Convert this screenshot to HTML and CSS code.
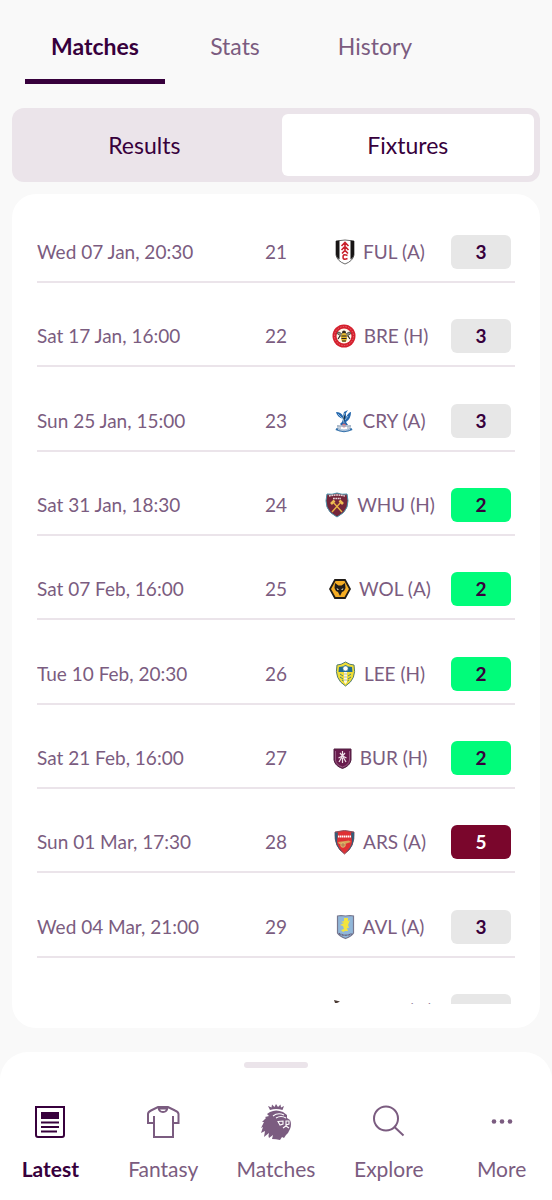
FILE: index.html
```html
<!DOCTYPE html>
<html lang="en">
<head>
<meta charset="utf-8">
<meta name="viewport" content="width=device-width, initial-scale=1">
<title>Fixtures</title>
<link rel="stylesheet" href="styles.css">
</head>
<body>
<div class="app">
  <div class="tabs" role="tablist">
    <button class="tab is-active" role="tab" aria-selected="true">Matches</button>
    <button class="tab" role="tab" aria-selected="false">Stats</button>
    <button class="tab" role="tab" aria-selected="false">History</button>
  </div>

  <div class="segment">
    <button class="segment-option">Results</button>
    <button class="segment-option is-selected">Fixtures</button>
  </div>

  <main class="card">
    <div class="fixtures-scroll">
      <table class="fixtures">
        <colgroup><col><col class="col-week"><col class="col-team"><col class="col-rating"></colgroup>
        <tbody>
          <tr>
            <td>Wed 07 Jan, 20:30</td><td class="week">21</td>
            <td><div class="team">
              <svg class="crest" width="20" height="26" viewBox="0 0 20 26" aria-hidden="true"><path d="M1 2Q10 0 19 2V16Q18 22 10 25Q2 22 1 16Z" fill="#fff" stroke="#444" stroke-width=".8"/><path d="M1 2 4.500 1.500V20.500Q1 18 1 15ZM15.500 1.500 19 2V15Q19 18 15.500 20.500Z" fill="#171415"/><path d="M6.500 7 10 3.500 13.500 7M6.500 11 10 7.500 13.500 11M7 14.500 10 11.500 13 14.500M10 4V13M12.500 16.500Q8 14.500 8 18T12.500 19.500" fill="none" stroke="#c9202c" stroke-width="1.600"/></svg>
              <span>FUL (A)</span></div></td>
            <td><span class="rating">3</span></td>
          </tr>
          <tr>
            <td>Sat 17 Jan, 16:00</td><td class="week">22</td>
            <td><div class="team">
              <svg class="crest" width="24" height="24" viewBox="0 0 24 24" aria-hidden="true"><circle cx="12" cy="12" r="11.500" fill="#d51f2d"/><circle cx="12" cy="12" r="9.500" fill="none" stroke="#e36a70" stroke-width="1" stroke-dasharray="1.500 1.200"/><circle cx="12" cy="12" r="7.500" fill="#fff7e9"/><path d="M11 11Q6 6 5 9.500L10 13ZM13 11Q18 6 19 9.500L14 13Z" fill="#8f8e80" stroke="#332f29" stroke-width=".7"/><circle cx="12" cy="8.500" r="2" fill="#33291b"/><ellipse cx="12" cy="13.500" rx="3" ry="4.500" fill="#e5b82f"/><path d="M9.500 12H14.500M9.500 14.500H14.500M10 17H14M8 12 6 15M16 12 18 15" stroke="#29231b" stroke-width="1.200"/></svg>
              <span>BRE (H)</span></div></td>
            <td><span class="rating">3</span></td>
          </tr>
          <tr>
            <td>Sun 25 Jan, 15:00</td><td class="week">23</td>
            <td><div class="team">
              <svg class="crest" width="20" height="24" viewBox="0 0 20 24" aria-hidden="true"><path d="M9 10Q3 8 2 3Q7 3 9 7L10 3 14 1 12 4 12 8Q15 3 17 3Q17 10 12 13L14 16 8 17 6 15 8 13Z" fill="#2467ad"/><path d="M4 5 9 10M11 4 9 9 10 14M14 7 11 11" stroke="#a8cce7" stroke-width=".8"/><circle cx="10" cy="16.500" r="2" fill="#d67379"/><path d="M3 17H17M4 20V16M6 20V17M14 20V17M16 20V16" stroke="#a6b5c7" stroke-width="1.300"/><path d="M2 20Q10 24 18 20" fill="none" stroke="#3472ac" stroke-width="2.500"/><path d="M4 20.500Q10 23 16 20.500" fill="none" stroke="#d5dce7" stroke-width=".8"/></svg>
              <span>CRY (A)</span></div></td>
            <td><span class="rating">3</span></td>
          </tr>
          <tr>
            <td>Sat 31 Jan, 18:30</td><td class="week">24</td>
            <td><div class="team">
              <svg class="crest" width="24" height="26" viewBox="0 0 24 26" aria-hidden="true"><path d="M2 2Q7 3 12 1Q17 3 22 2Q24 9 22 15Q20 21 12 25Q4 21 2 15Q0 9 2 2Z" fill="#74263a" stroke="#4993aa" stroke-width="1"/><path d="M4 4Q12 2 20 4M8 6.500H16" fill="none" stroke="#e6d6d8" stroke-width="1.500" stroke-dasharray="1.800 .6"/><path d="M8 10 17 20M16 10 7 20" stroke="#e9b345" stroke-width="1.400"/><path d="M6 12 9.500 8.500M14.500 8.500 18 12" stroke="#edbd54" stroke-width="2.600"/></svg>
              <span>WHU (H)</span></div></td>
            <td><span class="rating is-easy">2</span></td>
          </tr>
          <tr>
            <td>Sat 07 Feb, 16:00</td><td class="week">25</td>
            <td><div class="team">
              <svg class="crest" width="22" height="20" viewBox="0 0 22 20" aria-hidden="true"><path d="M6 1H16L21 10 16 19H6L1 10Z" fill="#f5ad24" stroke="#211d19" stroke-width="1.800"/><path d="M6 4 9.500 6.500H12.500L16 4 16.500 9 15 12 13 13 11 17 9 13 7 12 5.500 9Z" fill="#211d1a"/><path d="M7.500 9 10 10.500 8.500 11ZM14.500 9 12 10.500 13.500 11Z" fill="#fff2c3"/></svg>
              <span>WOL (A)</span></div></td>
            <td><span class="rating is-easy">2</span></td>
          </tr>
          <tr>
            <td>Tue 10 Feb, 20:30</td><td class="week">26</td>
            <td><div class="team">
              <svg class="crest" width="21" height="26" viewBox="0 0 21 26" aria-hidden="true"><path d="M2 4Q6 4 10.500 1Q15 4 19 4Q22 18 10.500 25Q-1 18 2 4Z" fill="#f0dd35" stroke="#527c71" stroke-width="1"/><path d="M4 6Q8 6 10.500 4Q13 6 17 6L17.500 11H3.500Z" fill="#216c93"/><circle cx="10.500" cy="7.500" r="2.500" fill="#fff" stroke="#65949e" stroke-width=".6"/><path d="M9 11H12V21L10.500 23 9 21Z" fill="#fff9dd"/><path d="M5 13 8 15M5 16 8 18M7 19 8.500 20M16 13 13 15M16 16 13 18M14 19 12.500 20" stroke="#4d8579" stroke-width="1"/><path d="M9 13H12M9 16H12M9 19H12" stroke="#9aac9b" stroke-width=".8"/></svg>
              <span>LEE (H)</span></div></td>
            <td><span class="rating is-easy">2</span></td>
          </tr>
          <tr>
            <td>Sat 21 Feb, 16:00</td><td class="week">27</td>
            <td><div class="team">
              <svg class="crest" width="19" height="21" viewBox="0 0 19 21" aria-hidden="true"><path d="M1 1H18V12Q17 18 9.500 20.500Q2 18 1 12Z" fill="#681b4c" stroke="#512042"/><path d="M2.500 3V12Q3 17 9.500 19Q16 17 16.500 12V3" fill="none" stroke="#a36b91" stroke-width=".8"/><path d="M9.500 3V7M7 5 9.500 8 12 5M5.500 10 9.500 8 13.500 10M6 14 9.500 8 13 14M9.500 10V15" fill="none" stroke="#efe2e9" stroke-width="1.200"/></svg>
              <span>BUR (H)</span></div></td>
            <td><span class="rating is-easy">2</span></td>
          </tr>
          <tr>
            <td>Sun 01 Mar, 17:30</td><td class="week">28</td>
            <td><div class="team">
              <svg class="crest" width="21" height="26" viewBox="0 0 21 26" aria-hidden="true"><path d="M1 3Q10.500 0 20 3Q21 18 10.500 25Q0 18 1 3Z" fill="#df3034" stroke="#8b5360"/><path d="M1 3Q3 4 4 3L3 13Q4 20 10.500 24Q0 19 1 3ZM20 3Q18 4 17 3L18 13Q17 20 10.500 24Q21 19 20 3Z" fill="#315d79"/><path d="M4 7.500H17" stroke="#fff" stroke-width="2" stroke-dasharray="1.500 .5"/><path d="M4 13 15 11.500 17 13 11 15H5Z" fill="#d4a759"/><circle cx="9" cy="16" r="2.300" fill="#b88858" stroke="#edc574" stroke-width=".8"/></svg>
              <span>ARS (A)</span></div></td>
            <td><span class="rating is-hard">5</span></td>
          </tr>
          <tr>
            <td>Wed 04 Mar, 21:00</td><td class="week">29</td>
            <td><div class="team">
              <svg class="crest" width="19" height="26" viewBox="0 0 19 26" aria-hidden="true"><path d="M1.500 2 5 1.500 9.500 2 14 1.500 17.500 2V19Q16 22 9.500 24.500Q3 22 1.500 19Z" fill="#91b7d9" stroke="#77778f" stroke-width="1.200"/><path d="M8 4 12 4 12 7 14 6 12 11 13 14 11 14 12 17H9L7 18 5 16 8 15 7 12 4 11 8 9 5 8 8 7Z" fill="#f3e43d"/><path d="M3 19.500Q9.500 23 16 19.500" fill="none" stroke="#635875" stroke-width="1.500" stroke-dasharray="1 .5"/></svg>
              <span>AVL (A)</span></div></td>
            <td><span class="rating">3</span></td>
          </tr>
          <tr>
            <td>Sat 14 Mar, 18:30</td><td class="week">30</td>
            <td><div class="team">
              <svg class="crest" width="24" height="24" viewBox="0 0 24 24" aria-hidden="true"><path d="M7 1 13 2.500 10 4H8Z" fill="#4b3b34"/><path d="M5 6H19V17L12 23 5 17Z" fill="#262223"/><path d="M9 6V20M13 6V21M17 6V18" stroke="#fff" stroke-width="2"/></svg>
              <span>NEW (H)</span></div></td>
            <td><span class="rating">3</span></td>
          </tr>
        </tbody>
      </table>
    </div>
  </main>

  <nav class="bottom-nav" aria-label="Main">
    <div class="handle"></div>
    <div class="nav-items">
      <a class="nav-item is-active" href="#latest">
        <svg class="nav-icon" width="36" height="36" viewBox="0 0 36 36" aria-hidden="true"><path d="M4 3H32V31Q32 33 30 33H6Q4 33 4 31Z" fill="none" stroke="currentColor" stroke-width="2"/><path d="M9 8H27V15H9Z" fill="currentColor"/><path d="M9 18.500H27M9 23H27M9 27.500H25" stroke="currentColor" stroke-width="2"/></svg>
        <span>Latest</span>
      </a>
      <a class="nav-item" href="#fantasy">
        <svg class="nav-icon" width="36" height="36" viewBox="0 0 36 36" fill="none" stroke="currentColor" stroke-width="2" aria-hidden="true"><path d="M9 12V33H28V12M9 19H3V10Q3 8 6 6.500L13 3H23L30 6.500Q33.500 8 33.500 10V19H28"/><path d="M13.500 3.500Q14 8 18 8T22.500 3.500M13 4.500H23"/></svg>
        <span>Fantasy</span>
      </a>
      <a class="nav-item" href="#matches">
        <svg class="nav-icon" width="36" height="36" viewBox="0 0 36 36" aria-hidden="true"><path d="M12 6 10 2 13.500 3.500 14 .5 16.500 3 18 0 20 3 22.500 .5 23 3.500 26 2 24.500 6Q18 4 12 6Z" fill="currentColor"/><path d="M12 8Q18 5 25 8L29 11 29 14 32 16Q34 20 32 25L30 29 28 31 26 34 24 33 22 36Q18 35 14 35L15 31 11 34Q10 32 11 29L6 33 7 27 3 29 5 23 3 24 6 18 4 18 8 14 7 13 11 12 9 10Z" fill="currentColor"/><path d="M15 12Q20 8 26 11M18 14Q23 11 28 14M20 17.500 25 17 25 20 22 21ZM28 17 31 17 31 20 28 21ZM25 24 28 22 31 24" fill="none" stroke="#fff" stroke-width="1.100"/></svg>
        <span>Matches</span>
      </a>
      <a class="nav-item" href="#explore">
        <svg class="nav-icon" width="36" height="36" viewBox="0 0 36 36" fill="none" stroke="currentColor" stroke-width="2" aria-hidden="true"><circle cx="15" cy="14.500" r="12"/><path d="M23.500 23 32.500 31.500"/></svg>
        <span>Explore</span>
      </a>
      <a class="nav-item" href="#more">
        <svg class="nav-icon" width="36" height="36" viewBox="0 0 36 36" fill="currentColor" aria-hidden="true"><circle cx="10" cy="17.500" r="2.300"/><circle cx="18" cy="17.500" r="2.300"/><circle cx="26" cy="17.500" r="2.300"/></svg>
        <span>More</span>
      </a>
    </div>
  </nav>
</div>
</body>
</html>
```
FILE: styles.css
```css
:root {
  --ink: #37003c;
  --muted: #7b5c80;
  --lilac: #ebe4ea;
}

* { box-sizing: border-box; }

body {
  margin: 0;
  background: #f9f9f9;
  color: var(--muted);
  font-family: Lato, "Open Sans", sans-serif;
  font-size: 19px;
  line-height: 24px;
}

button {
  border: 0;
  background: none;
  font: inherit;
  cursor: pointer;
}

.app {
  display: flex;
  flex-direction: column;
  height: 100vh;
}

.tabs {
  display: flex;
  padding: 8px 0 0 25px;
}

.tab {
  flex: 0 0 140px;
  height: 76px;
  padding: 4px 0 0;
  border-bottom: 5px solid transparent;
  color: var(--muted);
  font-size: 23px;
}

.tab.is-active {
  border-color: var(--ink);
  color: var(--ink);
  font-weight: 700;
}

.segment {
  display: grid;
  grid-template-columns: 1fr 1fr;
  gap: 11px;
  margin: 24px 12px 12px;
  padding: 6px;
  border-radius: 12px;
  background: var(--lilac);
}

.segment-option {
  height: 62px;
  border-radius: 6px;
  color: var(--ink);
  font-size: 23px;
}

.segment-option.is-selected { background: #fff; }

.card {
  flex: 1;
  display: flex;
  min-height: 0;
  margin: 0 12px 24px;
  padding: 5px 25px 24px;
  border-radius: 24px;
  background: #fff;
}

.fixtures-scroll {
  flex: 1;
  overflow-y: auto;
  scrollbar-width: none;
}

.fixtures {
  width: 100%;
  table-layout: fixed;
  border-spacing: 0;
}

.col-week { width: 74px; }
.col-team { width: 134px; }
.col-rating { width: 68px; }

.fixtures tr { height: 84px; }
.fixtures tr:nth-child(3n) { height: 85px; }

.fixtures td {
  padding: 0 0 12px;
  border-bottom: 2px solid var(--lilac);
  vertical-align: bottom;
  line-height: 34px;
  white-space: nowrap;
}

.fixtures .week { text-align: center; }

.team {
  display: flex;
  align-items: center;
  justify-content: center;
  gap: 8px;
}

.crest { flex: none; }

.rating {
  display: block;
  width: 60px;
  margin: 0 auto;
  border-radius: 6px;
  background: #e7e7e7;
  color: var(--ink);
  font-weight: 700;
  text-align: center;
}

.rating.is-easy { background: #01fc7a; }
.rating.is-hard { background: #7a062c; color: #fff; }

.bottom-nav {
  padding: 10px 8px 19px;
  border-radius: 28px 28px 0 0;
  background: #fff;
}

.handle {
  width: 64px;
  height: 6px;
  margin: 0 auto 36px;
  border-radius: 3px;
  background: var(--lilac);
}

.nav-items {
  display: grid;
  grid-template-columns: repeat(5, 1fr);
  gap: 28px;
}

.nav-item {
  display: flex;
  flex-direction: column;
  align-items: center;
  gap: 17px;
  color: var(--muted);
  font-size: 21px;
  text-decoration: none;
}

.nav-item.is-active {
  color: var(--ink);
  font-weight: 700;
}
```
